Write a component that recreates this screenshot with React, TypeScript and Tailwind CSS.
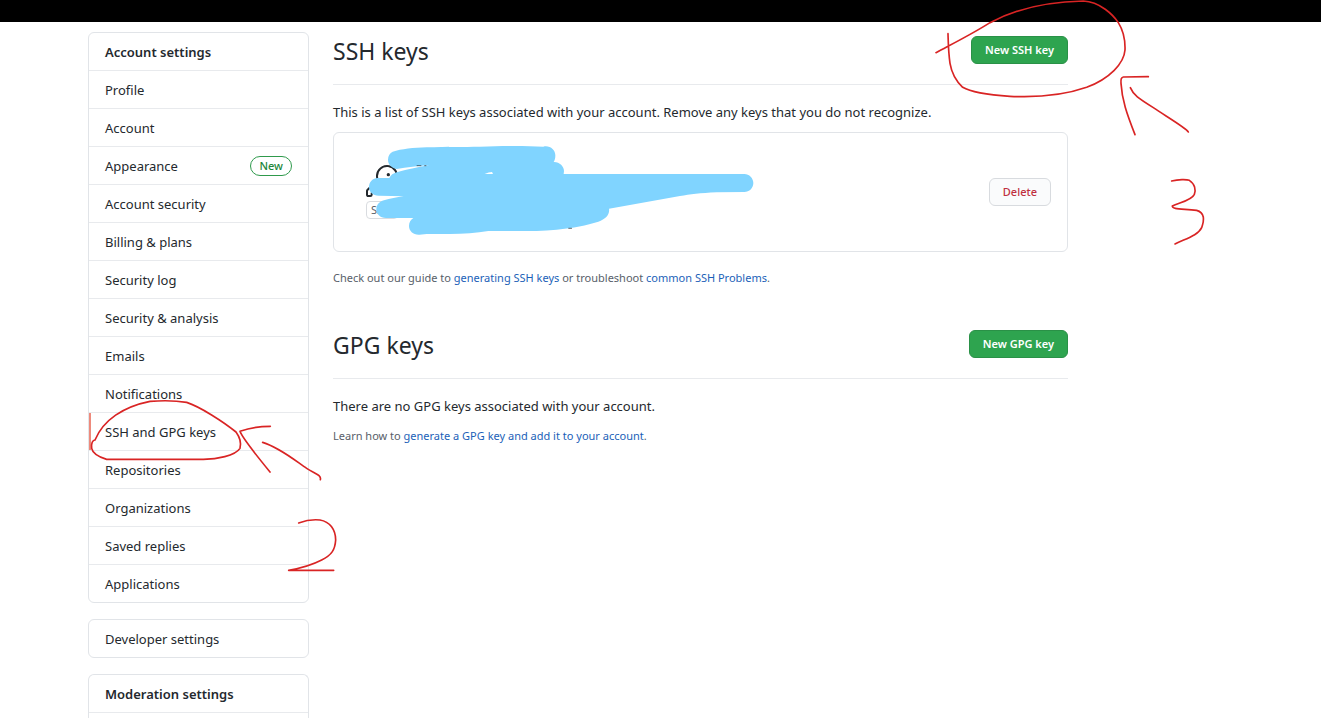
import type { ReactNode } from "react";

const accountLinks = [
  "Profile",
  "Account",
  "Appearance",
  "Account security",
  "Billing & plans",
  "Security log",
  "Security & analysis",
  "Emails",
  "Notifications",
  "SSH and GPG keys",
  "Repositories",
  "Organizations",
  "Saved replies",
  "Applications",
];

function MenuLink({ label }: { label: string }) {
  const current = label === "SSH and GPG keys";
  return (
    <a
      href="#"
      aria-current={current ? "page" : undefined}
      className="relative flex h-[37px] items-center justify-between px-4"
    >
      {current && <span className="absolute inset-y-0 left-0 w-0.5 bg-[#ee8a7c]" />}
      {label}
      {label === "Appearance" && (
        <span className="flex h-5 items-center rounded-full border border-[#2f9a4c] px-2 text-[11px] font-medium text-[#22863a]">
          New
        </span>
      )}
    </a>
  );
}

function Sidebar() {
  return (
    <nav aria-label="Settings" className="flex w-[221px] shrink-0 flex-col gap-4">
      <div className="rounded-md border border-[#e1e4e8]">
        <h2 className="flex h-[37px] items-center px-4 font-semibold">Account settings</h2>
        <ul>
          {accountLinks.map((label) => (
            <li key={label} className="border-t border-[#e8eaed]">
              <MenuLink label={label} />
            </li>
          ))}
        </ul>
      </div>
      <div className="rounded-md border border-[#e1e4e8]">
        <MenuLink label="Developer settings" />
      </div>
      <div className="flex-1 rounded-t-md border border-b-0 border-[#e1e4e8]">
        <h2 className="flex h-[38px] items-center border-b border-[#e8eaed] px-4 font-semibold">
          Moderation settings
        </h2>
      </div>
    </nav>
  );
}

function SectionHead({ title, action }: { title: string; action: string }) {
  return (
    <div className="flex h-[53px] items-start justify-between border-b border-[#e8eaed]">
      <h2 className="text-[23px] leading-[38px]">{title}</h2>
      <button
        type="button"
        className="mt-1 h-7 rounded-md border border-[#2a9147] bg-[#2ea44f] px-[13px] text-[11px] leading-5 font-semibold text-white"
      >
        {action}
      </button>
    </div>
  );
}

function TextLink({ children }: { children: ReactNode }) {
  return (
    <a href="#" className="text-[#1b5fb8]">
      {children}
    </a>
  );
}

function KeyIcon() {
  return (
    <svg viewBox="0 0 24 24" className="size-8" fill="#24292e" aria-hidden="true">
      <path d="M16.75 8.5a1.25 1.25 0 100-2.5 1.25 1.25 0 000 2.5z" />
      <path
        fillRule="evenodd"
        d="M15.75 0a8.25 8.25 0 00-7.851 10.79L.513 18.178A1.75 1.75 0 000 19.414v2.836C0 23.217.784 24 1.75 24h1.5A1.75 1.75 0 005 22.25v-1a.25.25 0 01.25-.25h2.735a.75.75 0 00.545-.22l.214-.213A.875.875 0 009 19.948V18.5a.25.25 0 01.25-.25h1.086c.464 0 .91-.184 1.237-.513l1.636-1.636A8.25 8.25 0 1015.75 0zM9 8.25a6.75 6.75 0 114.288 6.287.75.75 0 00-.804.168l-1.971 1.972a.25.25 0 01-.177.073H9.25A1.75 1.75 0 007.5 18.5v1H5.25a1.75 1.75 0 00-1.75 1.75v1a.25.25 0 01-.25.25h-1.5a.25.25 0 01-.25-.25v-2.836a.25.25 0 01.073-.177l7.722-7.721a.75.75 0 00.168-.804A6.73 6.73 0 019 8.25z"
      />
    </svg>
  );
}

/* Hand-drawn marks laid over the page: the redaction and the numbered steps. */
function Markup() {
  return (
    <svg
      viewBox="0 0 1321 718"
      className="pointer-events-none absolute left-0 top-0 h-[718px] w-[1321px]"
      fill="none"
      aria-hidden="true"
    >
      <g transform="translate(330 125) scale(0.33333)">
        <path
          fill="#80d4ff"
          d="M188 80C215 72 250 68 290 67C350 65 400 66 450 65C520 62 590 62 640 65C660 60 677 76 676 92C676 100 674 106 671 111C688 110 702 124 702 138L701 147H1243C1258 147 1270 160 1270 174C1270 189 1258 201 1243 201L1160 202C1110 204 1080 209 1050 213L837 251C840 268 828 283 805 290C770 301 730 309 680 314C640 318 600 318 560 318H475C440 323 400 327 360 327H290L268 329C250 330 237 318 237 303C237 292 242 284 250 279H168C150 279 139 267 139 253C139 240 148 230 162 226C180 220 200 217 221 214L148 212C130 213 117 202 117 186C117 171 128 159 143 159H178C182 150 190 145 200 142C235 133 265 126 298 121C265 123 230 127 200 132C184 128 174 118 174 104C174 92 180 84 188 80Z"
        />
        <path fill="#fff" d="M464 147C472 143 480 141 486 141L489 147Z" />
        <path stroke="#24292e" strokeWidth="2" d="M260 122H274M283 122H289M715 310H726" />
      </g>
      <g stroke="#d92424" strokeWidth="5" strokeLinecap="round" strokeLinejoin="round">
        <g transform="translate(920 0) scale(0.33333)">
          <path d="M48 158C110 125 160 100 210 68C290 25 390 5 490 3C540 5 580 45 595 68C612 95 616 120 615 150C612 190 570 235 500 262C420 290 330 292 270 289C210 285 150 275 128 262C105 240 95 220 90 190C85 155 85 130 84 101" />
          <path d="M685 230L610 231C602 232 602 240 603 250C606 300 620 340 645 404M631 263C640 285 655 295 700 323C740 350 800 385 805 396" />
          <path d="M755 543C775 538 800 538 808 541C825 552 828 570 823 583C815 602 775 608 757 618C755 628 785 626 830 631C855 638 853 660 845 683C835 705 800 715 765 732" />
        </g>
        <g transform="translate(80 380) scale(0.33333)">
          <path d="M45 180C70 120 130 80 210 64C250 61 290 62 320 67C360 80 430 125 468 156C482 175 484 190 480 205C465 228 410 237 370 238H80C60 232 38 220 35 205C33 190 38 180 45 180" />
          <path d="M571 139C530 139 500 147 480 154C485 170 520 215 570 276M548 187C600 203 650 245 680 265C705 281 725 285 721 299" />
          <path d="M656 429C680 420 700 418 720 420C750 425 767 450 767 480C765 510 755 525 725 540C700 553 660 565 626 571H761" />
        </g>
      </g>
    </svg>
  );
}

export default function App() {
  return (
    <div className="relative flex h-screen flex-col overflow-hidden bg-white font-['Noto_Sans',sans-serif] text-[13px] leading-5 text-[#24292e]">
      <header className="h-[22px] shrink-0 bg-black" />
      <div className="flex max-w-[1068px] flex-1 gap-6 pl-[88px] pt-2.5">
        <Sidebar />
        <main className="min-w-0 flex-1">
          <section>
            <SectionHead title="SSH keys" action="New SSH key" />
            <p className="mt-[17px]">
              This is a list of SSH keys associated with your account. Remove any keys that you do not recognize.
            </p>
            <div className="mt-2.5 flex h-[120px] items-center justify-between rounded-md border border-[#e1e4e8] pl-8 pr-4">
              <div className="flex flex-col gap-1">
                <KeyIcon />
                <span className="flex h-[18px] items-center rounded border border-[#d9dce0] px-1 text-[11px] text-[#586069]">
                  SSH
                </span>
              </div>
              <button
                type="button"
                className="h-7 rounded-md border border-[#d8dbdf] bg-[#fafbfc] px-[13px] text-[11px] leading-5 font-medium text-[#c0303f]"
              >
                Delete
              </button>
            </div>
            <p className="mt-4 text-[11px] leading-5 text-[#586069]">
              Check out our guide to <TextLink>generating SSH keys</TextLink> or troubleshoot{" "}
              <TextLink>common SSH Problems</TextLink>.
            </p>
          </section>
          <section className="mt-[38px]">
            <SectionHead title="GPG keys" action="New GPG key" />
            <p className="mt-[17px]">There are no GPG keys associated with your account.</p>
            <p className="mt-2.5 text-[11px] leading-5 text-[#586069]">
              Learn how to <TextLink>generate a GPG key and add it to your account</TextLink>.
            </p>
          </section>
        </main>
      </div>
      <Markup />
    </div>
  );
}
